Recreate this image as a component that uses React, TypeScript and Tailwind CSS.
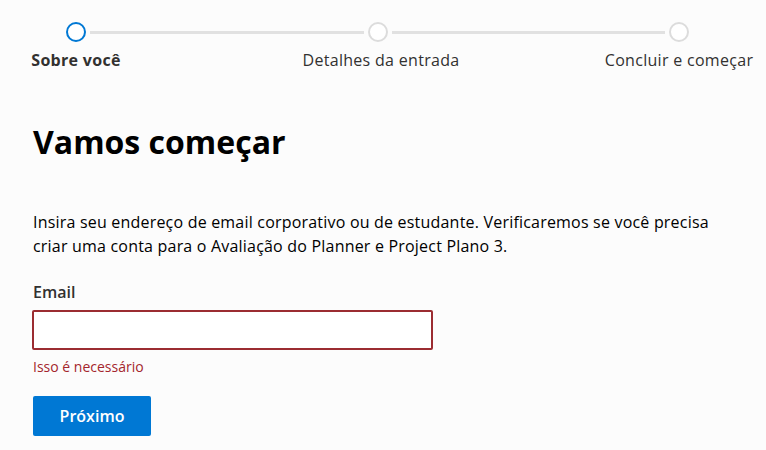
const steps = [
  { label: "Sobre você", active: true },
  { label: "Detalhes da entrada", active: false },
  { label: "Concluir e começar", active: false },
];

function Circle({ active }: { active: boolean }) {
  return (
    <div
      className={`h-5 w-5 shrink-0 rounded-full border-2 bg-white ${
        active ? "border-[#0078d4]" : "border-[#dcdcdc]"
      }`}
    />
  );
}

export default function App() {
  return (
    <div
      className="min-h-[450px] w-[766px] bg-[#fcfcfc] text-[#323130]"
      style={{ fontFamily: '"Open Sans", "Noto Sans", sans-serif' }}
    >
      {/* Stepper */}
      <div className="ml-[1px] w-[753px] pt-[22px]">
        <div className="flex items-center px-[65px]">
          <Circle active />
          <div className="mx-1 h-[3px] flex-1 bg-[#e1e1e1]" />
          <Circle active={false} />
          <div className="mx-1 h-[3px] flex-1 bg-[#e1e1e1]" />
          <Circle active={false} />
        </div>
        <div className="mt-[7px] flex justify-between">
          {steps.map((s) => (
            <div
              key={s.label}
              className={`w-[150px] whitespace-nowrap text-center text-[16px] leading-[22px] tracking-[0.3px] ${
                s.active ? "font-bold" : "font-normal"
              }`}
            >
              {s.label}
            </div>
          ))}
        </div>
      </div>

      {/* Form */}
      <div className="px-[33px]">
        <h1 className="mt-[49px] text-[32px] font-bold leading-[44px] text-black">
          Vamos começar
        </h1>
        <p className="mt-[46px] text-[16px] leading-[24px] tracking-[0.2px] text-black">
          Insira seu endereço de email corporativo ou de estudante. Verificaremos se você precisa
          <br />
          criar uma conta para o Avaliação do Planner e Project Plano 3.
        </p>
        <label className="mt-[22px] block text-[16px] font-semibold leading-[24px] text-[#323130]">
          Email
        </label>
        <input
          type="email"
          className="mt-[6px] block h-10 w-[401px] -ml-px rounded-[2px] border-2 border-[#9b2c31] bg-white outline-none"
        />
        <div className="mt-[7px] text-[14px] leading-[20px] text-[#a4262c]">Isso é necessário</div>
        <button className="mt-[19px] h-10 w-[118px] rounded-[2px] bg-[#0078d4] text-[16px] font-semibold text-white">
          Próximo
        </button>
      </div>
    </div>
  );
}
